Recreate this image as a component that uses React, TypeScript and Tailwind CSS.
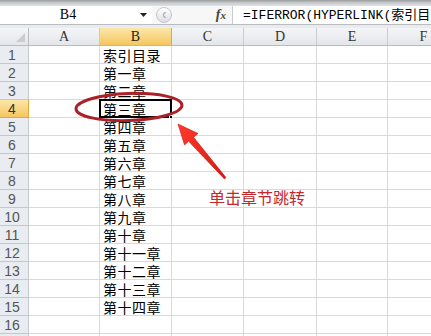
import React from 'react';

const rows = [
  '索引目录', '第一章', '第二章', '第三章', '第四章', '第五章', '第六章', '第七章',
  '第八章', '第九章', '第十章', '第十一章', '第十二章', '第十三章', '第十四章', '', '',
];

const cols = ['A', 'B', 'C', 'D', 'E', 'F'];
const widths = ['w-[71px]', 'w-[72px]', 'w-[72px]', 'w-[73px]', 'w-[71px]', 'w-[72px]'];

const cjk = { fontFamily: '"Noto Sans CJK SC", "Noto Sans", sans-serif' };

const FormulaBar: React.FC = () => (
  <div className="flex flex-col">
    {/* ribbon edge */}
    <div className="h-[6px] bg-gradient-to-b from-[#9b9b9b] via-[#c9ccd0] to-[#dfe2e6]" />
    <div className="flex h-[18px] bg-white">
      {/* name box */}
      <div className="relative flex w-[152px] shrink-0 items-center justify-center pr-[16px]">
        <span className="text-[14px] leading-none text-black" style={{ fontFamily: '"Liberation Serif", serif' }}>
          B4
        </span>
        <svg className="absolute right-[5px] top-[7px]" width="7" height="4" viewBox="0 0 7 4">
          <path d="M0 0 H7 L3.5 4 Z" fill="#222" />
        </svg>
      </div>
      {/* splitter handle */}
      <div className="flex w-[80px] shrink-0 items-center bg-[#f7f7f7]">
        <div className="ml-[4px] flex h-[16px] w-[16px] items-center justify-center rounded-full border border-[#c4c6ca] bg-gradient-to-b from-[#ffffff] to-[#dcdee2]">
          <div className="h-[6px] w-[3px] rounded-l-full border border-r-0 border-[#a9abaf]" />
        </div>
        <span
          className="ml-auto mr-[6px] text-[14px] italic font-bold leading-none text-[#444]"
          style={{ fontFamily: '"Liberation Serif", serif' }}
        >
          f<span className="text-[11px]">x</span>
        </span>
      </div>
      {/* formula */}
      <div className="flex min-w-0 flex-1 items-center overflow-hidden whitespace-nowrap border-l border-[#c8cbd0] pl-[10px]">
        <span className="text-[13px] leading-none text-black" style={{ fontFamily: '"Liberation Mono", "Noto Sans CJK SC", monospace' }}>
          =IFERROR(HYPERLINK(索引目录!A1,"返回")
        </span>
      </div>
    </div>
    <div className="h-[1px] bg-[#b9bcc1]" />
    <div className="h-[3px] bg-[#e9ebee]" />
  </div>
);

const Grid: React.FC = () => (
  <div className="flex flex-col">
    {/* column headers */}
    <div className="flex h-[18px] border-b border-[#b6bbc2]">
      <div className="relative w-[29px] shrink-0 border-r border-[#b6bbc2] bg-gradient-to-b from-[#f4f5f7] to-[#e3e6ea]">
        <svg className="absolute bottom-[3px] right-[3px]" width="9" height="9" viewBox="0 0 9 9">
          <path d="M9 0 V9 H0 Z" fill="#c9ccd1" />
        </svg>
      </div>
      {cols.map((c, i) => (
        <div
          key={c}
          className={`${widths[i]} flex shrink-0 items-center justify-center border-r text-[14px] leading-none ${
            c === 'B'
              ? 'border-[#e2a83d] bg-gradient-to-b from-[#fbe7a8] to-[#f5c65e] text-[#222]'
              : 'border-[#c8ccd2] bg-gradient-to-b from-[#f4f5f7] to-[#e3e6ea] text-[#333]'
          }`}
          style={{ fontFamily: '"Liberation Serif", serif' }}
        >
          {c}
        </div>
      ))}
    </div>

    {rows.map((text, r) => {
      const selected = r === 3;
      return (
        <div key={r} className="flex h-[18px]">
          <div
            className={`flex w-[29px] shrink-0 items-center justify-center border-b border-r pr-[4px] text-[14px] leading-none ${
              selected
                ? 'border-[#e2a83d] bg-gradient-to-b from-[#fbe7a8] to-[#f5c65e] text-[#333]'
                : 'border-[#c3c8ce] bg-[#e9ecf0] text-[#555]'
            }`}
            style={{ fontFamily: '"Liberation Sans", sans-serif' }}
          >
            {r + 1}
          </div>
          {cols.map((c, i) => (
            <div
              key={c}
              className={`${widths[i]} relative flex shrink-0 items-center whitespace-nowrap border-b border-r border-[#d9d9d9] bg-white`}
            >
              {c === 'B' && (
                <span className="pl-[3px] text-[14px] leading-none tracking-[0.5px] text-black" style={cjk}>
                  {text}
                </span>
              )}
              {c === 'B' && selected && (
                <>
                  <div className="absolute -left-[1px] -top-[1px] h-[19px] w-[73px] border-2 border-black" />
                  <div className="absolute -bottom-[3px] -right-[3px] h-[5px] w-[5px] border border-white bg-black" />
                </>
              )}
            </div>
          ))}
        </div>
      );
    })}
  </div>
);

const Annotation: React.FC = () => (
  <>
    <svg className="pointer-events-none absolute left-0 top-0" width="431" height="336" viewBox="0 0 431 336">
      <defs>
        <linearGradient id="arrowFill" x1="0" y1="0" x2="1" y2="1">
          <stop offset="0" stopColor="#ff3a2c" />
          <stop offset="1" stopColor="#d51812" />
        </linearGradient>
      </defs>
      <ellipse
        cx="129"
        cy="107"
        rx="53"
        ry="13.5"
        transform="rotate(-2 129 107)"
        fill="none"
        stroke="#aa2228"
        strokeWidth="3"
      />
      <path
        d="M178 124 L198 133.5 L193.6 137.3 L226 177.6 L224.4 178.9 L188.6 141.3 L184.5 145 Z"
        fill="url(#arrowFill)"
        stroke="#c91a14"
        strokeWidth="0.6"
        strokeLinejoin="round"
      />
    </svg>
    <span
      className="pointer-events-none absolute left-[209px] top-[189px] whitespace-nowrap text-[16px] leading-none text-[#c3282e]"
      style={cjk}
    >
      单击章节跳转
    </span>
  </>
);

export default function App() {
  return (
    <div className="relative h-[336px] w-[431px] overflow-hidden bg-white">
      <FormulaBar />
      <Grid />
      <Annotation />
    </div>
  );
}
